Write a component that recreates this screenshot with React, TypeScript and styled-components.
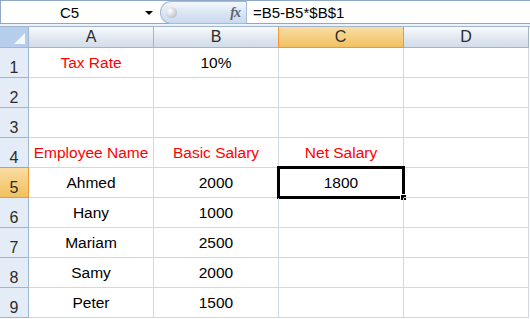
import styled, { createGlobalStyle } from 'styled-components';

const GlobalStyle = createGlobalStyle`
  body {
    margin: 0;
    background: #ffffff;
    font-family: 'Liberation Sans', Arial, sans-serif;
  }
`;

type Row = { a?: string; b?: string; c?: string; red?: boolean };

const rows: Row[] = [
  { a: 'Tax Rate', b: '10%' },
  {},
  {},
  { a: 'Employee Name', b: 'Basic Salary', c: 'Net Salary', red: true },
  { a: 'Ahmed', b: '2000', c: '1800' },
  { a: 'Hany', b: '1000' },
  { a: 'Mariam', b: '2500' },
  { a: 'Samy', b: '2000' },
  { a: 'Peter', b: '1500' },
];

const columns = ['A', 'B', 'C', 'D'];
const activeCol = 'C';
const activeRow = 5;

const Sheet = styled.div`
  width: 530px;
  height: 319px;
  overflow: hidden;
  background: #ffffff;
`;

const FormulaBar = styled.div`
  display: flex;
  align-items: stretch;
  height: 22px;
  border-top: 1px solid #8ea8c8;
  border-left: 1px solid #8ea8c8;
  border-bottom: 1px solid #8ea8c8;
  background: #ffffff;
`;

const NameBox = styled.div`
  position: relative;
  width: 159px;
  display: flex;
  align-items: center;
  justify-content: center;
  padding-right: 22px;
  box-sizing: border-box;
  font-size: 15px;
  color: #000;
`;

const DropArrow = styled.span`
  position: absolute;
  right: 7px;
  top: 10px;
  border-left: 4px solid transparent;
  border-right: 4px solid transparent;
  border-top: 4px solid #000;
`;

const FxPill = styled.div`
  position: relative;
  width: 86px;
  margin: 0 0 -1px 0;
  border: 1px solid #a7bbd6;
  border-right: none;
  border-radius: 11px 0 0 11px;
  background: linear-gradient(#f3f7fc, #d9e5f4 55%, #c9d9ee);
  display: flex;
  align-items: center;
  justify-content: flex-end;
  padding-right: 6px;
  box-sizing: border-box;
`;

const Knob = styled.span`
  position: absolute;
  left: 5px;
  top: 5px;
  width: 11px;
  height: 11px;
  border-radius: 50%;
  background: radial-gradient(circle at 35% 35%, #ffffff, #c3c7cc 70%, #9aa0a8);
`;

const FxLabel = styled.span`
  font-family: 'Liberation Serif', 'Times New Roman', serif;
  font-style: italic;
  font-weight: bold;
  font-size: 14px;
  color: #5b6470;
  letter-spacing: -1px;
`;

const Formula = styled.div`
  flex: 1;
  display: flex;
  align-items: center;
  padding-left: 6px;
  font-size: 15px;
  color: #000;
  border-left: 1px solid #a7bbd6;
`;

const Spacer = styled.div`
  height: 2px;
  background: #eef2f8;
`;

const Grid = styled.div`
  display: grid;
  grid-template-columns: 29px repeat(4, 125px);
  grid-template-rows: 21px;
  grid-auto-rows: 30px;
  border-top: 1px solid #9eb6ce;
`;

const Corner = styled.div`
  position: relative;
  background: #b7cdec;
  border-right: 1px solid #9eb6ce;
  border-bottom: 1px solid #9eb6ce;
  &::after {
    content: '';
    position: absolute;
    right: 3px;
    bottom: 3px;
    border-left: 11px solid transparent;
    border-bottom: 11px solid #f4f7fc;
  }
`;

const ColHeader = styled.div<{ $active?: boolean }>`
  display: flex;
  align-items: center;
  justify-content: center;
  font-size: 16px;
  color: #2b2b2b;
  background: ${(p) =>
    p.$active ? 'linear-gradient(#f9dea6, #f1c15f)' : 'linear-gradient(#f9fbfd, #dfe6f0 60%, #d3dce9)'};
  border-right: 1px solid ${(p) => (p.$active ? '#f29536' : '#9eb6ce')};
  border-bottom: 1px solid ${(p) => (p.$active ? '#f29536' : '#9eb6ce')};
  ${(p) => (p.$active ? 'box-shadow: inset 1px 0 0 #f29536; margin-left: -1px;' : '')}
`;

const RowHeader = styled.div<{ $active?: boolean }>`
  display: flex;
  align-items: flex-end;
  justify-content: center;
  font-size: 16px;
  line-height: 18px;
  color: #2b2b2b;
  background: ${(p) => (p.$active ? 'linear-gradient(#f9dea6, #f1c15f)' : '#e4ecf7')};
  border-right: 1px solid ${(p) => (p.$active ? '#f29536' : '#9eb6ce')};
  border-bottom: 1px solid ${(p) => (p.$active ? '#f29536' : '#9eb6ce')};
  ${(p) => (p.$active ? 'box-shadow: inset 0 1px 0 #f29536; margin-top: -1px;' : '')}
`;

const Cell = styled.div<{ $red?: boolean }>`
  position: relative;
  display: flex;
  align-items: flex-end;
  justify-content: center;
  padding-bottom: 5px;
  box-sizing: border-box;
  font-size: 15.5px;
  line-height: 18px;
  white-space: nowrap;
  color: ${(p) => (p.$red ? '#ff0000' : '#000000')};
  border-right: 1px solid #d0d7e5;
  border-bottom: 1px solid #d0d7e5;
`;

const Selection = styled.div`
  position: absolute;
  left: -2px;
  top: -2px;
  right: -2px;
  bottom: -2px;
  border: 3px solid #000;
  pointer-events: none;
  &::after {
    content: '';
    position: absolute;
    right: -5px;
    bottom: -5px;
    width: 5px;
    height: 5px;
    background: #000;
    border: 1px solid #fff;
  }
`;

export default function App() {
  return (
    <Sheet>
      <GlobalStyle />
      <FormulaBar>
        <NameBox>
          C5
          <DropArrow />
        </NameBox>
        <FxPill>
          <Knob />
          <FxLabel>fx</FxLabel>
        </FxPill>
        <Formula>=B5-B5*$B$1</Formula>
      </FormulaBar>
      <Spacer />
      <Grid>
        <Corner />
        {columns.map((c) => (
          <ColHeader key={c} $active={c === activeCol}>
            {c}
          </ColHeader>
        ))}
        {rows.map((r, i) => {
          const n = i + 1;
          const values = [r.a, r.b, r.c, undefined];
          return [
            <RowHeader key={`h${n}`} $active={n === activeRow}>
              {n}
            </RowHeader>,
            ...values.map((v, j) => {
              const isRed = r.red || (n === 1 && j === 0);
              const selected = n === activeRow && columns[j] === activeCol;
              return (
                <Cell key={`${n}-${j}`} $red={isRed}>
                  {v}
                  {selected && <Selection />}
                </Cell>
              );
            }),
          ];
        })}
      </Grid>
    </Sheet>
  );
}
